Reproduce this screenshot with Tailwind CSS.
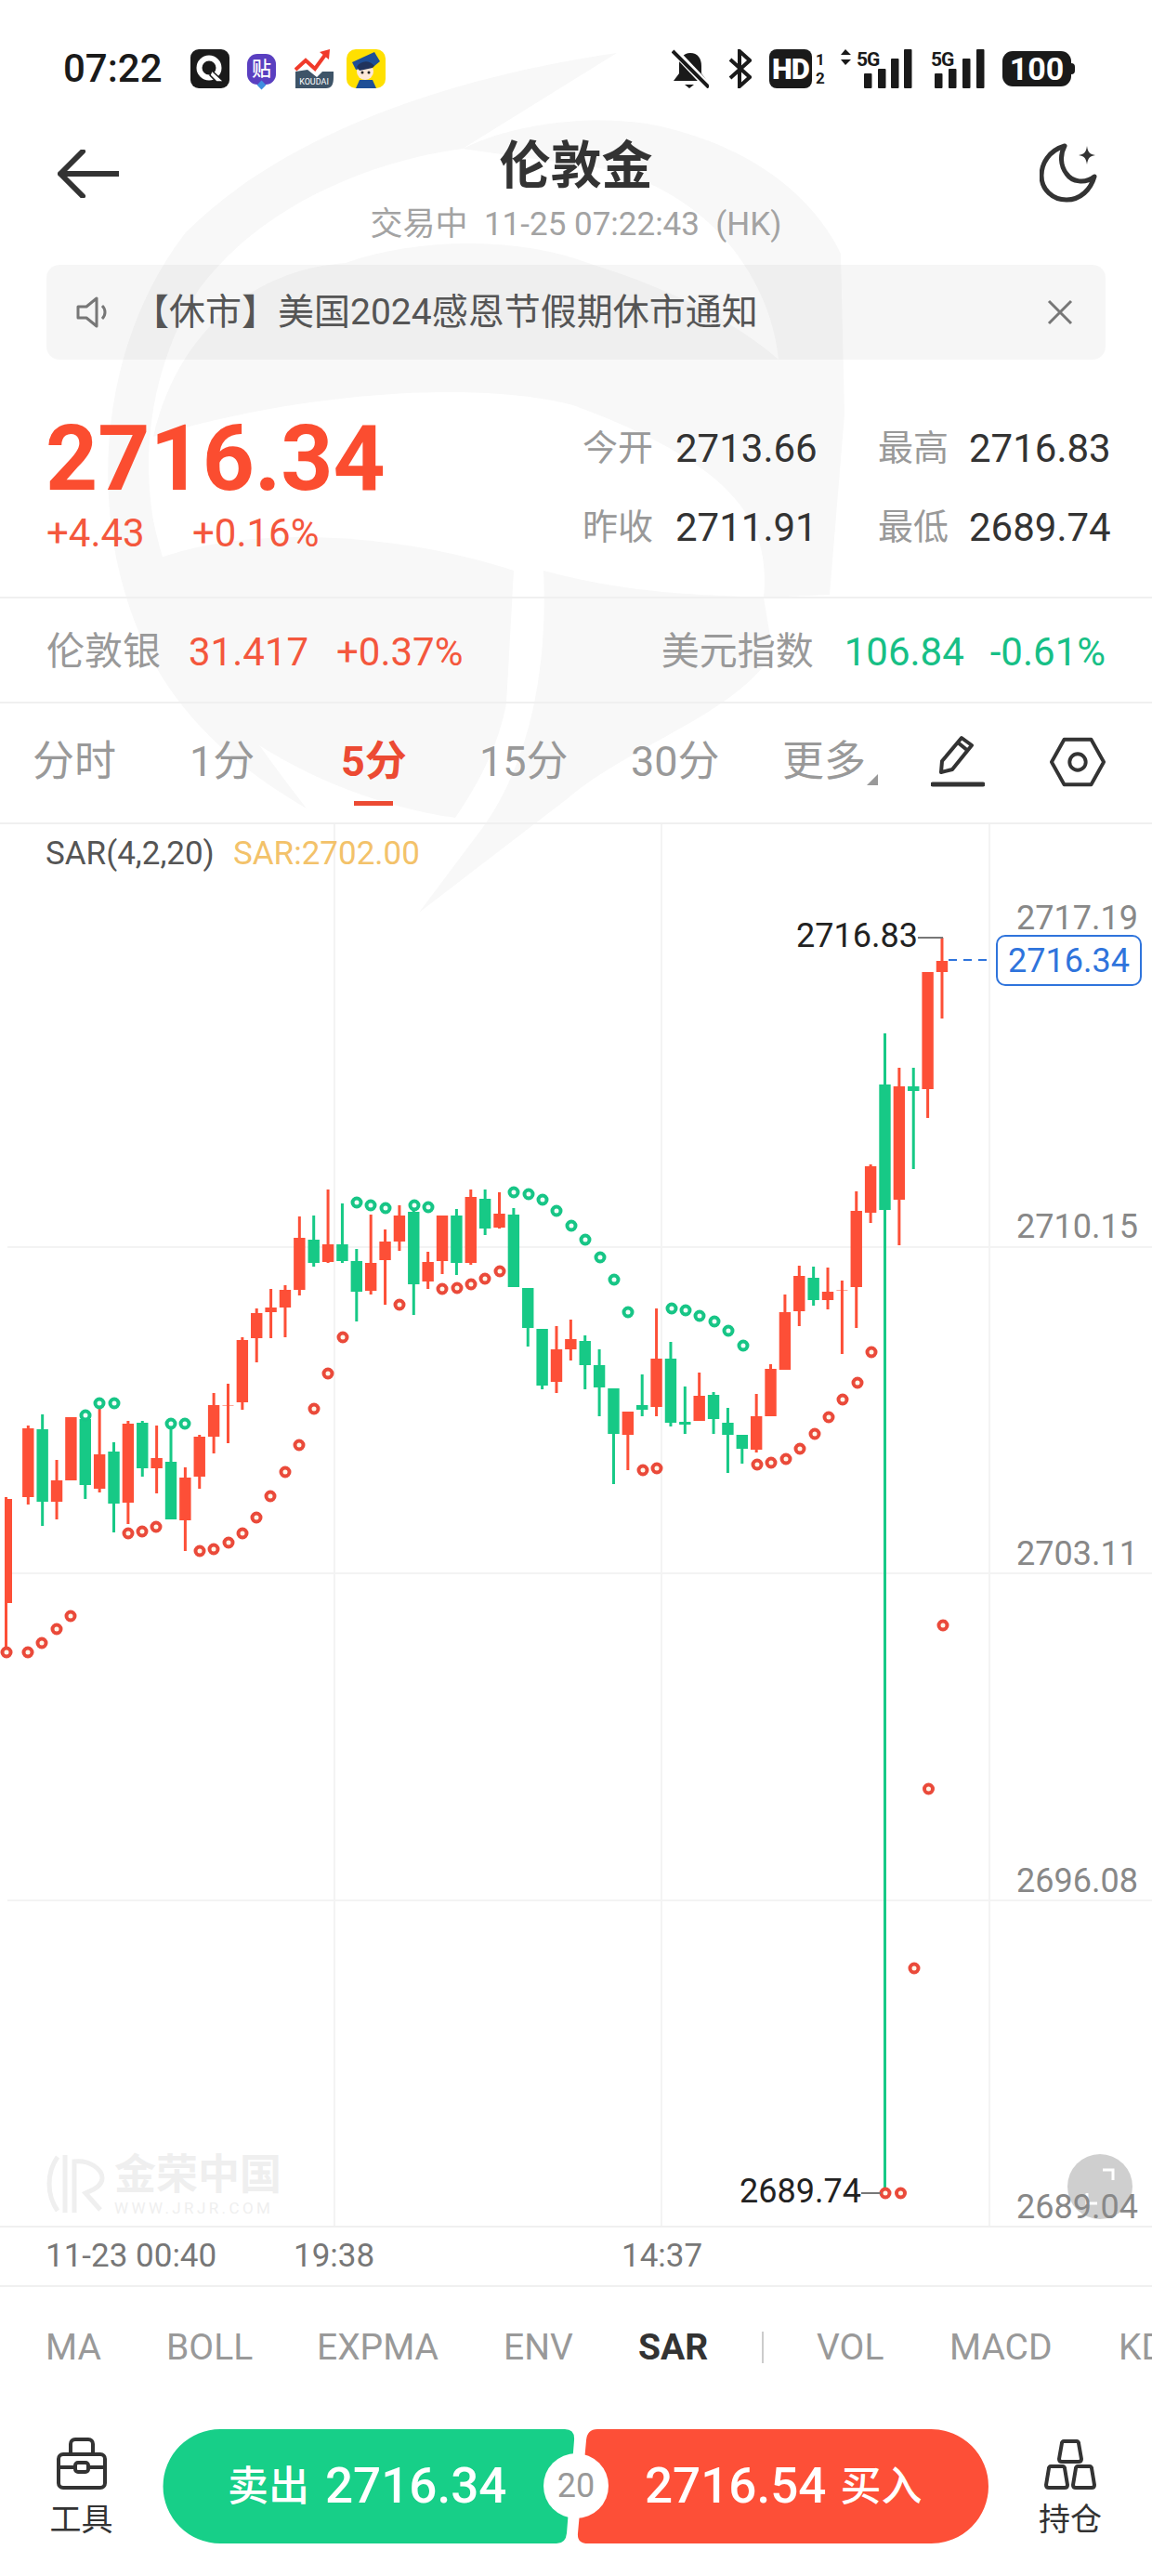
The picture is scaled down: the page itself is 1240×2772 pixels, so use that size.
<!DOCTYPE html>
<html lang="zh-CN">

<head>
    <meta charset="UTF-8">
    <meta name="viewport" content="width=device-width, initial-scale=1.0">
    <title>伦敦金</title>
    <script src="https://cdn.jsdelivr.net/npm/@tailwindcss/browser@4"></script>
</head>

<body>
    <div class="relative w-[1240px] h-[2772px] overflow-hidden bg-white text-[#333] font-[Roboto,'Noto_Sans_CJK_SC',sans-serif]">

        <!-- watermark behind the page -->
        <svg class="absolute left-0 top-0" width="1240" height="1100" viewBox="0 0 1240 1100" fill="#f8f8f8">
            <path d="M664 57 C470 85 300 150 200 250 C130 340 100 470 125 600 C150 720 210 800 330 870 C260 780 190 680 165 560 C150 470 170 380 215 310 C290 210 420 170 498 160Z" />
            <path d="M498 160 C560 130 640 125 696 133 C790 150 870 200 905 273 L909 446 L893 640 L822 643 C830 560 790 500 617 436 C520 410 330 420 165 470 C190 360 270 290 372 283 C450 255 560 255 633 283 C720 310 790 345 838 387 C830 300 760 200 640 180Z" />
            <path d="M130 620 C230 560 420 570 553 614 L545 757 C535 810 510 850 490 880 C350 860 220 780 170 700Z" />
            <path d="M585 614 C680 640 760 640 822 643 L832 703 C790 770 680 800 610 860 L451 982 L520 890 C570 820 590 720 585 614Z" />
        </svg>

        <div class="relative flex flex-col h-full">
            <!-- status bar -->
            <div class="flex items-center h-[42px] mt-[53px] pl-[68px] shrink-0">
                <span class="w-[137px] text-[42px] leading-[42px] font-medium text-[#1a1a1a]">07:22</span>
                <svg width="42" height="42" viewBox="0 0 42 42">
                    <rect width="42" height="42" rx="9" fill="#1a1a1a" />
                    <circle cx="20" cy="20" r="10.5" fill="none" stroke="#fff" stroke-width="6" />
                    <path d="M23 23 L36 35 L28 35 L21 28Z" fill="#fff" stroke="#1a1a1a" stroke-width="1.5" />
                </svg>
                <div class="relative ml-[19px] w-[31px] h-[33px] rounded-[11px] bg-[#5a3fc0] flex items-center justify-center text-white text-[21px] leading-none font-medium">贴
                    <span class="absolute left-[12px] bottom-[-4px] w-[7px] h-[7px] rotate-45 bg-[#3f8fe0]"></span>
                </div>
                <svg class="ml-[20px]" width="42" height="42" viewBox="0 0 42 42">
                    <path d="M1 24 V42 H34 C40 42 42 38 42 30 V24 H30 L24 30 L14 22Z" fill="#3e5468" />
                    <path d="M1 22 L12 12 L22 21 L33 6" fill="none" stroke="#f03a2a" stroke-width="4" />
                    <path d="M27 3 L38 0 L37 11Z" fill="#f03a2a" />
                    <text x="21" y="38" font-size="9" fill="#fff" text-anchor="middle">KOUDAI</text>
                </svg>
                <svg class="ml-[14px]" width="42" height="42" viewBox="0 0 42 42">
                    <rect width="42" height="42" rx="10" fill="#ffe000" />
                    <circle cx="20" cy="24" r="9" fill="#fde8d8" />
                    <path d="M6 14 L30 3 L36 13 L30 18 L10 22Z" fill="#1e4f96" />
                    <path d="M11 19 C15 12 25 11 30 18 L28 20 L14 23Z" fill="#20335c" />
                    <path d="M10 42 L14 33 L28 33 L32 42Z" fill="#1e4f96" />
                    <circle cx="17" cy="25" r="1.5" fill="#222" />
                    <circle cx="24" cy="25" r="1.5" fill="#222" />
                </svg>

                <!-- right side icons -->
                <svg class="ml-[308px]" width="40" height="42" viewBox="0 0 40 42">
                    <path d="M20 4 C28 4 32 10 32 18 L32 26 L38 34 L8 34 L2 34 L8 26 L8 16 C8 10 13 4 20 4Z" fill="#1a1a1a" />
                    <path d="M14 38 H24 L19 42Z" fill="#1a1a1a" />
                    <path d="M3 2 L39 40" stroke="#fff" stroke-width="8" />
                    <path d="M1 2 L40 41" stroke="#1a1a1a" stroke-width="4" />
                </svg>
                <svg class="ml-[21px]" width="25" height="42" viewBox="0 0 25 42">
                    <path d="M2 11 L23 30 L12 40 V2 L23 12 L2 31" fill="none" stroke="#1a1a1a" stroke-width="4" />
                </svg>
                <div class="ml-[19px] w-[46px] h-[42px] rounded-[8px] bg-[#1a1a1a] flex items-center justify-center text-white text-[31px] leading-none font-black tracking-[-1px]">HD</div>
                <div class="ml-[4px] w-[10px] flex flex-col text-[17px] leading-[20px] font-bold text-[#1a1a1a]"><span>1</span><span>2</span></div>
                <svg class="ml-[16px]" width="78" height="42" viewBox="0 0 78 42">
                    <path d="M1 6 L6 0 L12 6Z M1 11 H12 L6 17Z" fill="#1a1a1a" />
                    <text x="18" y="18" font-size="21" font-weight="700" fill="#1a1a1a" letter-spacing="-1">5G</text>
                    <rect x="26" y="26" width="8.5" height="16" rx="1" fill="#1a1a1a" />
                    <rect x="41" y="21" width="8.5" height="21" rx="1" fill="#1a1a1a" />
                    <rect x="55" y="10" width="8.5" height="32" rx="1" fill="#1a1a1a" />
                    <rect x="69" y="0" width="8.5" height="42" rx="1" fill="#1a1a1a" />
                </svg>
                <svg class="ml-[18px]" width="62" height="42" viewBox="0 0 62 42">
                    <text x="2" y="18" font-size="21" font-weight="700" fill="#1a1a1a" letter-spacing="-1">5G</text>
                    <rect x="6" y="26" width="8.5" height="16" rx="1" fill="#1a1a1a" />
                    <rect x="21" y="21" width="8.5" height="21" rx="1" fill="#1a1a1a" />
                    <rect x="36" y="10" width="8.5" height="32" rx="1" fill="#1a1a1a" />
                    <rect x="51" y="0" width="8.5" height="42" rx="1" fill="#1a1a1a" />
                </svg>
                <div class="relative ml-[17px] w-[74px] h-[38px] rounded-[11px] bg-[#1a1a1a] flex items-center justify-center text-white text-[34px] leading-none font-bold">100
                    <span class="absolute right-[-4px] top-[13px] w-[4px] h-[12px] rounded-r-sm bg-[#1a1a1a]"></span>
                </div>
            </div>

            <!-- title -->
            <div class="flex items-center h-[68px] mt-[49px] px-[62px] shrink-0">
                <svg class="mt-[18px]" width="66" height="52" viewBox="0 0 66 52" fill="none" stroke="#333" stroke-width="6" stroke-linecap="round" stroke-linejoin="round">
                    <path d="M65 26 H3 M27 2 L3 26 L27 50" />
                </svg>
                <span class="flex-1 text-center text-[55px] leading-[68px] font-bold text-[#333] pr-[2px]">伦敦金</span>
                <svg class="mt-[16px] translate-x-[5px]" width="64" height="64" viewBox="0 0 64 64" fill="none" stroke="#333" stroke-width="5" stroke-linejoin="round">
                    <path d="M27 3 C10 8 2 22 2 35 C2 50 14 61 29 61 C44 61 55 50 59 36 C49 44 35 42 29 33 C22 24 22 12 27 3Z" />
                    <path d="M51 3 C52 10 54 12 60 13 C54 14 52 16 51 23 C50 16 48 14 42 13 C48 12 50 10 51 3Z" fill="#333" stroke="none" />
                </svg>
            </div>
            <div class="h-[40px] mt-[10px] text-center text-[35px] leading-[40px] text-[#a3a3a3] shrink-0">交易中&nbsp; 11-25 07:22:43&nbsp; (HK)</div>

            <!-- notice -->
            <div class="flex items-center h-[102px] mx-[50px] mt-[23px] rounded-[14px] bg-black/[0.035] shrink-0">
                <svg class="ml-[32px]" width="34" height="36" viewBox="0 0 34 36" fill="none" stroke="#777" stroke-width="3" stroke-linejoin="round">
                    <path d="M2 12 H11 L22 3 V33 L11 24 H2Z" />
                    <path d="M28 11 C32 15 32 21 28 25" />
                </svg>
                <span class="ml-[27px] flex-1 text-[39px] leading-[50px] text-[#555]">【休市】美国2024感恩节假期休市通知</span>
                <svg class="mr-[35px]" width="28" height="28" viewBox="0 0 28 28" stroke="#777" stroke-width="3">
                    <path d="M2 2 L26 26 M26 2 L2 26" />
                </svg>
            </div>

            <!-- quote -->
            <div class="flex h-[257px] border-b-2 border-[#f0f0f0] shrink-0">
                <div class="w-[627px] pl-[49px] pt-[54px]">
                    <div class="text-[98px] leading-[106px] font-bold text-[#fb4d30]">2716.34</div>
                    <div class="flex mt-[2px] pl-[1px] text-[42px] leading-[50px] text-[#f4573d]">
                        <span class="w-[157px]">+4.43</span>
                        <span>+0.16%</span>
                    </div>
                </div>
                <div class="grid grid-cols-[100px_218px_98px_auto] grid-rows-[85px_85px] items-center pt-[53px] h-[223px] text-[#999] text-[38px]">
                    <span>今开</span><span class="text-[42px] text-[#333]">2713.66</span>
                    <span>最高</span><span class="text-[42px] text-[#333]">2716.83</span>
                    <span>昨收</span><span class="text-[42px] text-[#333]">2711.91</span>
                    <span>最低</span><span class="text-[42px] text-[#333]">2689.74</span>
                </div>
            </div>

            <!-- related symbols -->
            <div class="flex items-center justify-between h-[113px] px-[50px] pt-[4px] border-b-2 border-[#f0f0f0] shrink-0 text-[42px]">
                <div class="flex items-center">
                    <span class="w-[153px] text-[41px] text-[#999]">伦敦银</span>
                    <span class="w-[159px] text-[#f4573d]">31.417</span>
                    <span class="text-[#f4573d]">+0.37%</span>
                </div>
                <div class="flex items-center">
                    <span class="w-[197px] text-[41px] text-[#999]">美元指数</span>
                    <span class="w-[157px] text-[#17bf86]">106.84</span>
                    <span class="text-[#17bf86]">-0.61%</span>
                </div>
            </div>

            <!-- periods -->
            <div class="flex items-center h-[130px] pl-[35px] pb-[3px] border-b-2 border-[#f0f0f0] shrink-0 text-[45px] text-[#999]">
                <span class="w-[169px]">分时</span>
                <span class="w-[163px]">1分</span>
                <span class="relative w-[149px] font-bold text-[#ec4a33]">5分
                    <span class="absolute left-[14px] top-[76px] w-[42px] h-[5px] bg-[#ec4a33]"></span>
                </span>
                <span class="w-[163px]">15分</span>
                <span class="w-[163px]">30分</span>
                <span class="relative w-[160px]">更多
                    <span class="absolute left-[91px] top-[47px] w-0 h-0 border-l-[12px] border-l-transparent border-b-[12px] border-b-[#999]"></span>
                </span>
                <svg width="58" height="58" viewBox="0 0 58 58" fill="none" stroke="#333" stroke-width="4" stroke-linejoin="round">
                    <path d="M11 40 L12 28 L33 3 L44 11 L23 37Z M29 8 L40 17" />
                    <path d="M2 53 H56" stroke-width="5" stroke-linecap="round" />
                </svg>
                <svg class="ml-[70px]" width="60" height="56" viewBox="0 0 62 56" fill="none" stroke="#333" stroke-width="4" stroke-linejoin="round">
                    <path d="M2 28 L16 3 H46 L60 28 L46 53 H16Z" />
                    <circle cx="31" cy="28" r="9" />
                </svg>
            </div>

            <!-- chart canvas -->
            <div class="relative h-[1508px] shrink-0">
                <svg id="chart" class="absolute left-0 top-0" width="1240" height="1508" viewBox="0 887 1240 1508"></svg>
                <div class="absolute left-[49px] top-[13px] flex text-[35px] leading-[38px]">
                    <span class="w-[202px] text-[#555]">SAR(4,2,20)</span>
                    <span class="text-[#f3c26a]">SAR:2702.00</span>
                </div>

                <span class="absolute left-[857px] top-[100px] text-[36px] leading-[40px] text-[#222]">2716.83</span>
                <span class="absolute left-[796px] top-[1451px] text-[36px] leading-[40px] text-[#222]">2689.74</span>
                <div class="absolute left-[1072px] top-[119px] flex items-center justify-center w-[157px] h-[55px] rounded-[10px] border-2 border-[#2f74dc] bg-white text-[36px] text-[#2f74dc]">2716.34</div>

                <span class="absolute right-[15px] top-[81px] text-[36px] leading-[40px] text-[#888]">2717.19</span>
                <span class="absolute right-[15px] top-[413px] text-[36px] leading-[40px] text-[#888]">2710.15</span>
                <span class="absolute right-[15px] top-[765px] text-[36px] leading-[40px] text-[#888]">2703.11</span>
                <span class="absolute right-[15px] top-[1117px] text-[36px] leading-[40px] text-[#888]">2696.08</span>
                <span class="absolute right-[15px] top-[1468px] text-[36px] leading-[40px] text-[#888]">2689.04</span>

                <!-- jrjr logo -->
                <svg class="absolute left-[50px] top-[1431px]" width="64" height="64" viewBox="0 0 64 64" fill="none" stroke="#efefef" stroke-width="5">
                    <path d="M12 3 C0 20 0 44 12 61 M20 1 V63 M30 63 V8 C46 6 60 16 60 26 C60 36 46 40 42 42 L58 60" />
                </svg>
                <div class="absolute left-[123px] top-[1428px] w-[182px] text-[#efefef]">
                    <div class="text-[45px] leading-[52px] font-bold">金荣中国</div>
                    <div class="text-[17px] leading-[18px] tracking-[3.4px] whitespace-nowrap">WWW.JRJR.COM</div>
                </div>
            </div>

            <!-- time axis -->
            <div class="flex items-center h-[66px] pl-[49px] border-y-2 border-[#f0f0f0] shrink-0 text-[35px] text-[#777]">
                <span class="w-[267px]">11-23 00:40</span>
                <span class="w-[353px]">19:38</span>
                <span>14:37</span>
            </div>

            <!-- indicators -->
            <div class="flex items-center h-[130px] pl-[49px] whitespace-nowrap shrink-0 text-[39px] text-[#999]">
                <span class="w-[130px] shrink-0">MA</span>
                <span class="w-[162px] shrink-0">BOLL</span>
                <span class="w-[201px] shrink-0">EXPMA</span>
                <span class="w-[145px] shrink-0">ENV</span>
                <span class="w-[133px] shrink-0 font-bold text-[#333]">SAR</span>
                <span class="w-[59px] shrink-0"><span class="block w-[2px] h-[34px] bg-[#ccc]"></span></span>
                <span class="w-[143px] shrink-0">VOL</span>
                <span class="w-[182px] shrink-0">MACD</span>
                <span class="shrink-0">KDJ</span>
            </div>

            <!-- trade bar -->
            <div class="flex h-[123px] mt-[23px] shrink-0">
                <div class="flex flex-col items-center w-[175px] pt-[9px]">
                    <svg width="56" height="56" viewBox="0 0 56 56" fill="none" stroke="#333" stroke-width="4" stroke-linejoin="round">
                        <path d="M16 18 V7 C16 4 18 2 21 2 H35 C38 2 40 4 40 7 V18" />
                        <rect x="3" y="18" width="50" height="36" rx="5" />
                        <path d="M3 32 H21 M35 32 H53" />
                        <rect x="21" y="27" width="14" height="10" rx="3" />
                    </svg>
                    <span class="mt-[12px] text-[34px] leading-[40px] text-[#333]">工具</span>
                </div>
                <div class="relative flex w-[889px] h-[123px]">
                    <svg class="absolute left-0 top-0" width="889" height="123" viewBox="0 0 889 123">
                        <path d="M62 0 H433 Q444 0 443 12 L435 112 Q434 123 424 123 H62 A61.5 61.5 0 0 1 62 0Z" fill="#17cf88" />
                        <path d="M468 0 H827.5 A61.5 61.5 0 0 1 827.5 123 H458 Q446 123 447 112 L456 12 Q457 0 468 0Z" fill="#fd4f37" />
                    </svg>
                    <div class="relative flex items-center w-[519px] pl-[70px] text-white">
                        <span class="text-[44px] font-medium">卖出</span>
                        <span class="ml-[17px] text-[53px] font-medium">2716.34</span>
                    </div>
                    <div class="relative flex items-center text-white">
                        <span class="text-[53px] font-medium">2716.54</span>
                        <span class="ml-[15px] text-[44px] font-medium">买入</span>
                    </div>
                    <div class="absolute left-[410px] top-[26px] flex items-center justify-center w-[70px] h-[70px] rounded-full bg-white text-[36px] text-[#999]">20</div>
                </div>
                <div class="flex flex-col items-center w-[176px] pt-[11px]">
                    <svg width="58" height="54" viewBox="0 0 58 54" fill="none" stroke="#333" stroke-width="4" stroke-linejoin="round">
                        <path d="M20 4 C20 3 21 2 22 2 H36 C37 2 38 3 38 4 L41 21 C41 23 40 24 38 24 H20 C18 24 17 23 17 21Z" />
                        <path d="M6 31 C6 30 7 29 8 29 H21 C22 29 23 30 23 31 L26 49 C26 51 25 52 23 52 H6 C4 52 3 51 3 49Z" />
                        <path d="M35 31 C35 30 36 29 37 29 H50 C51 29 52 30 52 31 L55 49 C55 51 54 52 52 52 H35 C33 52 32 51 32 49Z" />
                    </svg>
                    <span class="mt-[12px] text-[34px] leading-[40px] text-[#333]">持仓</span>
                </div>
            </div>
        </div>
    </div>

    <script>
        const UP = "#fd4f37"
        const DOWN = "#17c986"
        const X0 = 30.3
        const STEP = 15.37

        // colour, body top, body bottom, wick top, wick bottom
        const candles = [
            [UP, 1537, 1611, 1534, 1619], [DOWN, 1538, 1616, 1522, 1642], [UP, 1593, 1616, 1571, 1635], [UP, 1525, 1593, 1525, 1593],
            [DOWN, 1527, 1598, 1520, 1613], [UP, 1565, 1602, 1510, 1606], [DOWN, 1562, 1618, 1552, 1649], [UP, 1532, 1617, 1529, 1640],
            [DOWN, 1531, 1580, 1529, 1589], [UP, 1569, 1580, 1534, 1607], [DOWN, 1573, 1635, 1532, 1635], [UP, 1590, 1636, 1579, 1669],
            [UP, 1546, 1589, 1544, 1602], [UP, 1512, 1546, 1499, 1564], [UP, 1512, 1512.6, 1489, 1553], [UP, 1442, 1509, 1439, 1517],
            [UP, 1413, 1440, 1408, 1466], [UP, 1407, 1412, 1387, 1440], [UP, 1388, 1407, 1383, 1439], [UP, 1332, 1388, 1309, 1394],
            [DOWN, 1334, 1359, 1308, 1363], [UP, 1339, 1358, 1280, 1359], [DOWN, 1339, 1357, 1295, 1359], [DOWN, 1357, 1390, 1344, 1422],
            [UP, 1359, 1389, 1307, 1393], [UP, 1336, 1356, 1323, 1404], [UP, 1308, 1336, 1297, 1346], [DOWN, 1304, 1382, 1300, 1415],
            [UP, 1358, 1379, 1347, 1387], [UP, 1308, 1357, 1308, 1371], [DOWN, 1308, 1359, 1301, 1372], [UP, 1288, 1359, 1280, 1361],
            [DOWN, 1290, 1322, 1280, 1329], [UP, 1306, 1321, 1283, 1322], [DOWN, 1307, 1385, 1300, 1385], [DOWN, 1386, 1429, 1386, 1449],
            [DOWN, 1430, 1491, 1430, 1495], [UP, 1452, 1487, 1427, 1499], [UP, 1441, 1452, 1420, 1464], [DOWN, 1443, 1469, 1437, 1495],
            [DOWN, 1469, 1493, 1452, 1524], [DOWN, 1494, 1543, 1494, 1597], [UP, 1519, 1544, 1519, 1582], [DOWN, 1512, 1517, 1479, 1524],
            [UP, 1462, 1514, 1408, 1524], [DOWN, 1462, 1531, 1444, 1535], [DOWN, 1530, 1533, 1492, 1543], [UP, 1502, 1529, 1477, 1529],
            [DOWN, 1501, 1527, 1498, 1543], [DOWN, 1531, 1544, 1515, 1585], [DOWN, 1544, 1559, 1544, 1575], [UP, 1524, 1560, 1500, 1563],
            [UP, 1473, 1524, 1468, 1524], [UP, 1412, 1474, 1393, 1474], [UP, 1373, 1411, 1362, 1427], [DOWN, 1375, 1399, 1363, 1405],
            [UP, 1390, 1399, 1364, 1409], [UP, 1388, 1388.6, 1378, 1457], [UP, 1303, 1385, 1282, 1429], [UP, 1255, 1305, 1253, 1316],
            [DOWN, 1167, 1302, 1112, 2355], [UP, 1169, 1291, 1149, 1340], [DOWN, 1169, 1174, 1149, 1258], [UP, 1046, 1172, 1046, 1203],
            [UP, 1034, 1046, 1009, 1096]
        ]

        const greenDots = [[92, 1523], [107, 1510], [123, 1510], [184, 1532], [199, 1532], [384, 1294], [399, 1297], [415, 1300], [446, 1297], [461, 1299],
            [553, 1283], [569, 1285], [584, 1291], [599, 1303], [615, 1319], [630, 1334], [646, 1353], [661, 1377], [676, 1412],
            [723, 1408], [738, 1410], [753, 1416], [769, 1422], [784, 1432], [800, 1448]]

        const redDots = [[7, 1778], [30, 1778], [45, 1768], [61, 1753], [76, 1739], [138, 1650], [153, 1648], [168, 1643], [215, 1669], [230, 1667], [246, 1660],
            [261, 1650], [276, 1633], [291, 1610], [307, 1584], [322, 1555], [338, 1516], [353, 1478], [369, 1439], [430, 1404],
            [476, 1387], [492, 1386], [507, 1382], [522, 1376], [538, 1368], [692, 1582], [707, 1580], [815, 1576], [830, 1574], [846, 1570],
            [861, 1559], [877, 1543], [892, 1525], [907, 1506], [923, 1488], [938, 1455], [1015, 1749], [999.5, 1925], [984, 2118], [953, 2360], [969.5, 2360]]

        let out = ""

        // grid
        for (const y of [1342, 1693, 2045]) {
            out += `<rect x="8" y="${y - 1}" width="1232" height="2" fill="#f3f3f3"/>`
        }
        for (const x of [360, 712, 1065]) {
            out += `<rect x="${x - 1}" y="887" width="2" height="1508" fill="#f3f3f3"/>`
        }

        // the cut off candle at the left edge
        out += `<rect x="5" y="1611" width="3" height="165" fill="${UP}"/><rect x="7" y="1613" width="6" height="112" fill="${UP}"/>`

        candles.forEach((c, i) => {
            const x = X0 + STEP * i
            const thin = c[2] - c[1] < 1
            out += `<rect x="${x - 1.5}" y="${c[3]}" width="3" height="${c[4] - c[3]}" fill="${c[0]}"/>`
            if (thin) {
                out += `<rect x="${x - 6}" y="${c[1]}" width="12" height="1" fill="${c[0]}" opacity="0.5"/>`
            } else {
                out += `<rect x="${x - 6.2}" y="${c[1]}" width="12.4" height="${c[2] - c[1]}" fill="${c[0]}"/>`
            }
        })

        for (const [x, y] of greenDots) {
            out += `<circle cx="${x}" cy="${y}" r="4.5" fill="#f4fffa" stroke="#17c586" stroke-width="4"/>`
        }
        for (const [x, y] of redDots) {
            out += `<circle cx="${x}" cy="${y}" r="4.5" fill="#fff8ea" stroke="#ea4a3a" stroke-width="4"/>`
        }

        // high, low and last price leaders
        out += `<path d="M988 1009 H1015" stroke="#777" stroke-width="2"/>`
        out += `<path d="M927 2360 H948" stroke="#777" stroke-width="2"/>`
        out += `<path d="M1021 1033 H1065" stroke="#2f74dc" stroke-width="2" stroke-dasharray="9 7"/>`

        // fullscreen button
        out += `<circle cx="1184" cy="2353" r="35" fill="#cfcfcf"/>`
        out += `<path d="M1187 2335 H1198 V2346 M1181 2371 H1170 V2360" fill="none" stroke="#fff" stroke-width="3"/>`

        document.getElementById("chart").innerHTML = out
    </script>
</body>

</html>
